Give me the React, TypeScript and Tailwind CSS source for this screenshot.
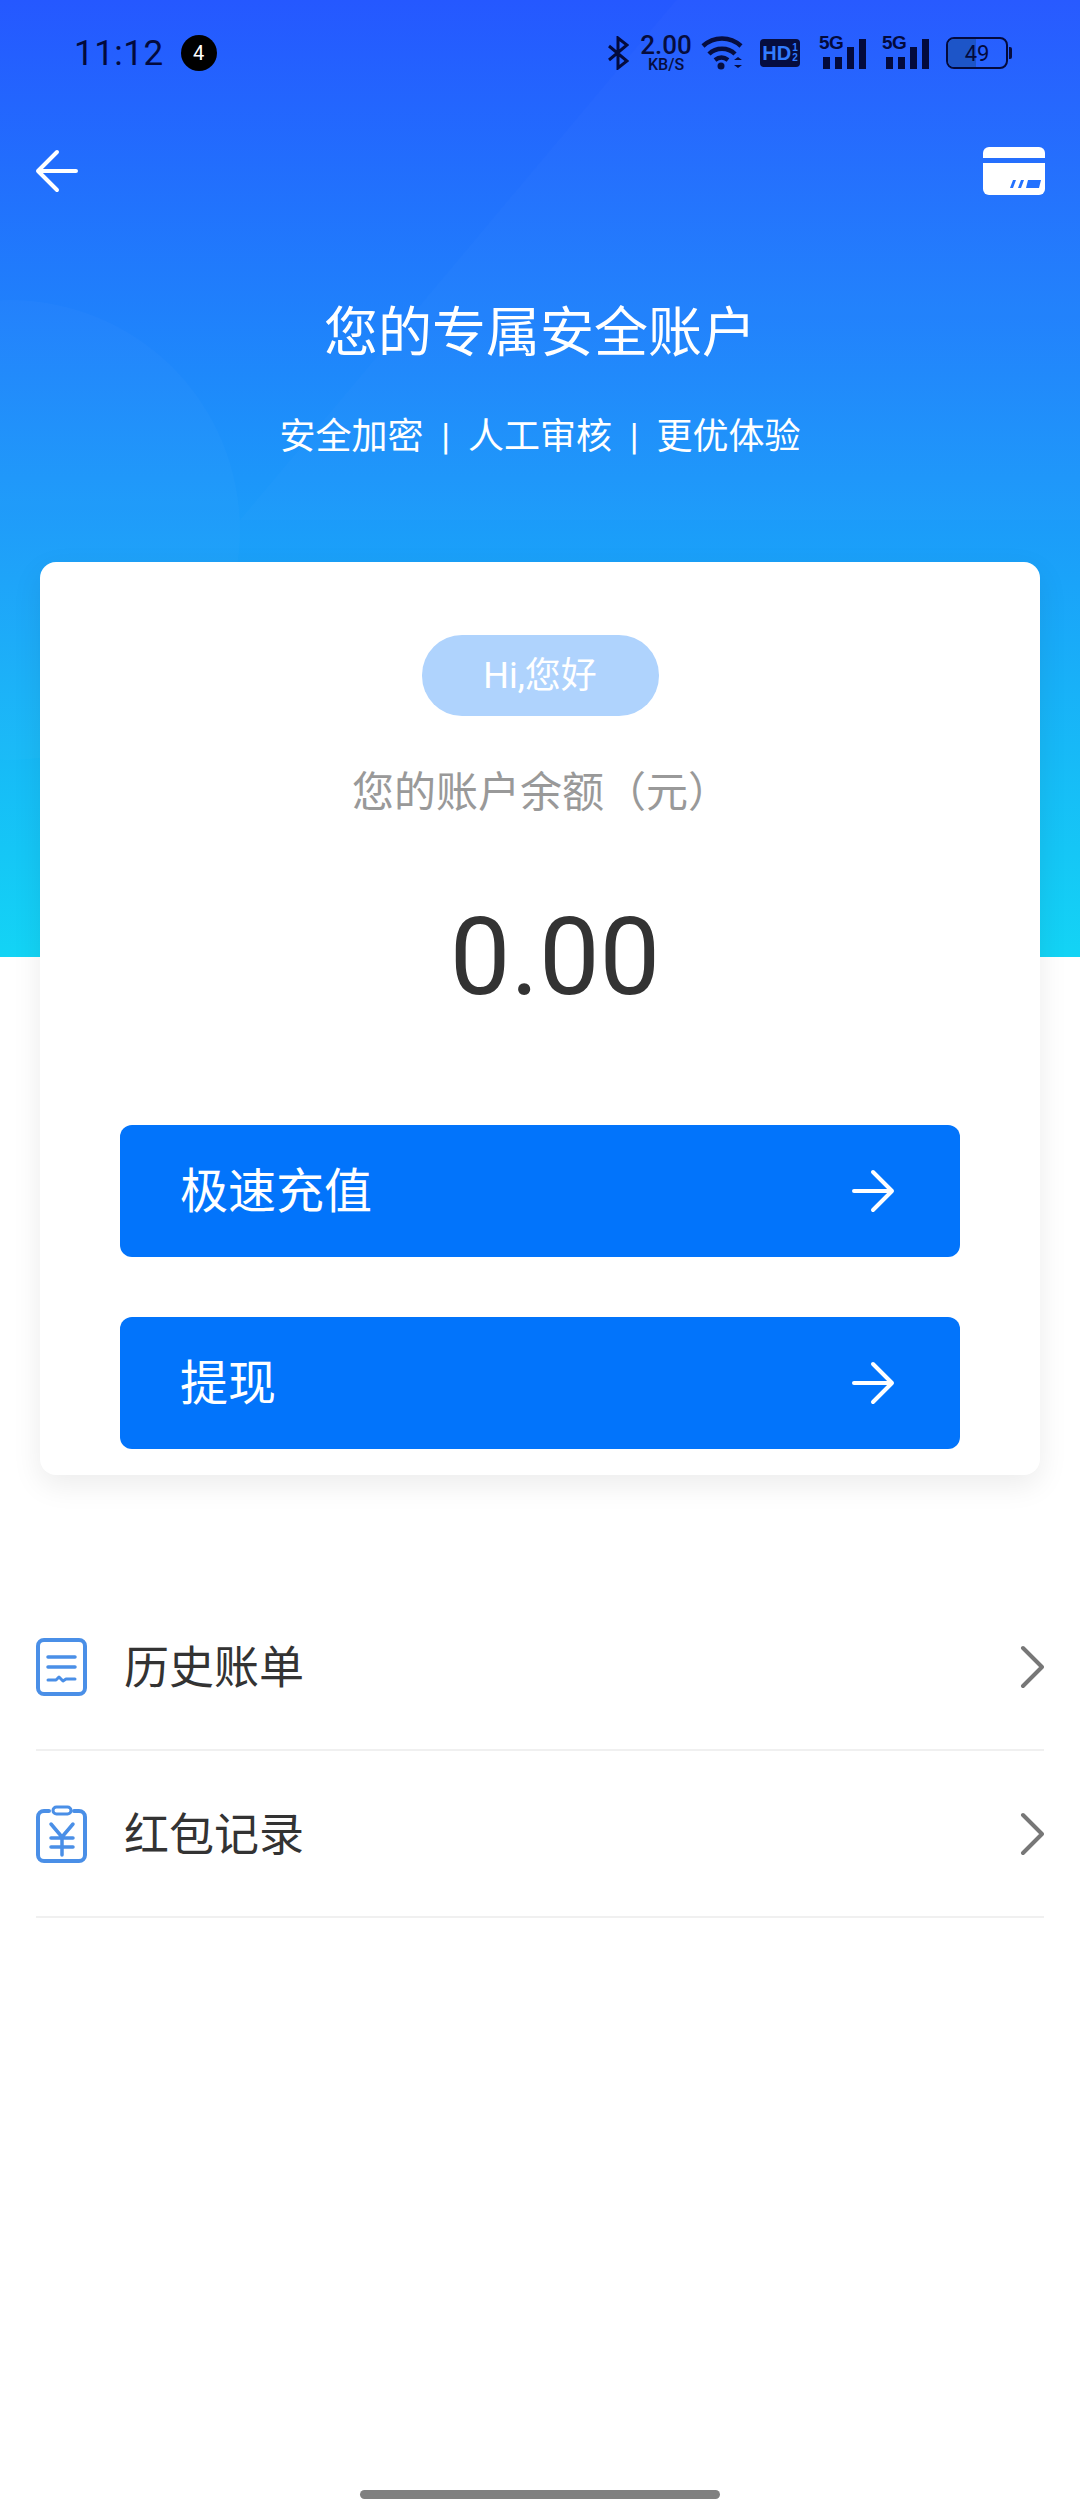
import React from 'react';

const cjk = "font-['Roboto','Noto_Sans_CJK_SC',sans-serif]";

function Arrow({ flip = false }: { flip?: boolean }) {
  return (
    <svg width="46" height="46" viewBox="0 0 46 46" fill="none" stroke="#fff" strokeWidth="4" strokeLinecap="round" strokeLinejoin="round" className={flip ? 'rotate-180' : ''}>
      <path d="M4 23h38M23 4l19 19-19 19" />
    </svg>
  );
}

function Chevron() {
  return (
    <svg width="24" height="44" viewBox="0 0 24 44" fill="none" stroke="#777" strokeWidth="4" strokeLinecap="round" strokeLinejoin="round">
      <path d="M3 3l19 19L3 41" />
    </svg>
  );
}

function BillIcon() {
  return (
    <svg width="52" height="58" viewBox="0 0 52 58" fill="none" stroke="#4a8fe7" strokeLinecap="round" strokeLinejoin="round">
      <rect x="2" y="2" width="47" height="54" rx="6" strokeWidth="4" />
      <path d="M12 19h27M12 29h27" strokeWidth="3.5" />
      <path d="M12 42h8l3-3 4 4 3-2h9" strokeWidth="3" />
    </svg>
  );
}

function RedPacketIcon() {
  return (
    <svg width="52" height="58" viewBox="0 0 52 58" fill="none" stroke="#4a8fe7" strokeLinecap="round" strokeLinejoin="round">
      <path d="M13 6H8a6 6 0 0 0-6 6v38a6 6 0 0 0 6 6h35a6 6 0 0 0 6-6V12a6 6 0 0 0-6-6h-5" strokeWidth="4" />
      <rect x="17" y="2" width="18" height="7" rx="3.5" strokeWidth="3" />
      <path d="M15 19l11 13 11-13M15 33h22M15 42h22M26 32v18" strokeWidth="3.5" />
    </svg>
  );
}

function CardIcon() {
  return (
    <svg width="62" height="48" viewBox="0 0 62 48">
      <path d="M6 0h50a6 6 0 0 1 6 6v5H0V6a6 6 0 0 1 6-6z" fill="#fff" />
      <path d="M0 16h62v26a6 6 0 0 1-6 6H6a6 6 0 0 1-6-6z" fill="#fff" />
      <path d="M27 41l3-8h3l-3 8zM35 41l3-8h3l-3 8zM43 41l2-8h13l-2 8z" fill="#1f6fff" />
    </svg>
  );
}

function Signal() {
  return (
    <div className="relative w-[47px] h-[32px]">
      <span className="absolute left-0 top-[-4px] text-[19px] leading-none font-bold font-['Liberation_Sans_Narrow','Liberation_Sans',sans-serif] tracking-[-0.5px]">5G</span>
      <div className="absolute left-[4px] bottom-0 flex items-end gap-[5px]">
        <div className="w-[7px] h-[12px] bg-[#030a3c]" />
        <div className="w-[7px] h-[12px] bg-[#030a3c]" />
        <div className="w-[7px] h-[22px] bg-[#030a3c]" />
        <div className="w-[7px] h-[30px] bg-[#030a3c]" />
      </div>
    </div>
  );
}

function StatusBar() {
  return (
    <div className="h-[80px] pt-[34px] pl-[74px] pr-[68px] flex items-start justify-between text-[#030a3c]">
      <div className="flex items-center h-[38px] gap-[17px]">
        <span className="font-['Roboto',sans-serif] text-[35px] leading-none tracking-[0.5px]">11:12</span>
        <span className="w-[36px] h-[36px] rounded-full bg-black text-white text-[20px] flex items-center justify-center font-['Roboto',sans-serif]">4</span>
      </div>
      <div className="flex items-center h-[38px]">
        <svg width="22" height="34" viewBox="0 0 22 34" fill="none" stroke="#030a3c" strokeWidth="3" className="mr-[12px]">
          <path d="M2 10l18 15-9 7V2l9 7L2 24" />
        </svg>
        <div className="flex flex-col items-center font-['Roboto',sans-serif] font-medium w-[50px] mr-[10px]">
          <span className="text-[26px] leading-[24px]">2.00</span>
          <span className="text-[16px] leading-[16px]">KB/S</span>
        </div>
        <svg width="44" height="34" viewBox="0 0 44 34" fill="none" stroke="#030a3c" strokeWidth="4.5" className="mr-[15px]">
          <path d="M2 10c11-10 27-10 38 0M8 18c7-7 19-7 26 0M14 24c4-3 9-3 13 0" />
          <circle cx="20" cy="30" r="3.5" fill="#030a3c" stroke="none" />
          <path d="M33 24l4-3 4 3zM33 29l4 3 4-3z" fill="#030a3c" stroke="none" />
        </svg>
        <div className="w-[40px] h-[28px] bg-[#030a3c] rounded-[4px] text-[#2f7bff] font-bold font-['Liberation_Sans_Narrow','Liberation_Sans',sans-serif] flex items-center justify-center gap-[1px] mr-[19px]">
          <span className="text-[20px] leading-none">HD</span>
          <span className="flex flex-col items-center text-[10px] leading-[10px]">
            <span>1</span>
            <span>2</span>
          </span>
        </div>
        <Signal />
        <div className="w-[16px]" />
        <Signal />
        <div className="w-[17px]" />
        <div className="w-[62px] h-[32px] rounded-[8px] border-2 border-[#030a3c] relative flex items-center justify-center overflow-hidden">
          <div className="absolute left-0 top-0 bottom-0 w-[49%] bg-[#1d55c8]" />
          <span className="relative text-[22px] font-['Roboto',sans-serif]">49</span>
        </div>
        <div className="w-[3px] h-[12px] bg-[#030a3c] rounded-r-[2px] ml-[1px]" />
      </div>
    </div>
  );
}

function ActionButton({ label, className }: { label: string; className?: string }) {
  return (
    <button className={`w-full h-[132px] rounded-[12px] bg-[#0274fb] flex items-center justify-between pl-[60px] pr-[64px] text-white text-[48px] ${className ?? ''}`}>
      <span className="mt-[2px]">{label}</span>
      <Arrow />
    </button>
  );
}

function ListRow({ icon, label }: { icon: React.ReactNode; label: string }) {
  return (
    <div className="h-[167px] border-b-2 border-[#f0f0f0] flex items-center justify-between">
      <div className="flex items-center gap-[36px]">
        {icon}
        <span className="text-[45px] text-[#333] mt-[5px]">{label}</span>
      </div>
      <Chevron />
    </div>
  );
}

export default function App() {
  return (
    <div className={`w-[1080px] h-[2520px] bg-white relative overflow-hidden ${cjk}`}>
      <div className="h-[957px] bg-[linear-gradient(180deg,#2558ff,#13d4f5)] relative overflow-hidden">
        <div className="absolute left-[-220px] top-[300px] w-[460px] h-[460px] rounded-full bg-white/[0.02]" />
        <div className="absolute left-[500px] top-[-100px] w-[900px] h-[620px] -skew-x-[40deg] bg-white/[0.015]" />
        <StatusBar />
        <div className="flex items-center justify-between pl-[34px] pr-[35px] mt-[67px]">
          <Arrow flip />
          <CardIcon />
        </div>
        <h1 className="text-center text-white text-[54px] leading-[64px] mt-[107px]">您的专属安全账户</h1>
        <p className="text-center text-white text-[36px] leading-[48px] mt-[47px] whitespace-pre">安全加密  |  人工审核  |  更优体验</p>
      </div>

      <div className="absolute left-[40px] top-[562px] w-[1000px] h-[913px] bg-white rounded-[16px] shadow-[0_10px_30px_rgba(0,0,0,0.08)] px-[80px] flex flex-col items-center">
        <div className="w-[237px] h-[81px] rounded-[40px] bg-[#afd3fd] text-white text-[36px] flex items-center justify-center mt-[73px]">Hi,您好</div>
        <div className="text-[#999] text-[42px] leading-[56px] mt-[49px] ml-[2px]">您的账户余额（元）</div>
        <div className="text-[#333] text-[108px] leading-[120px] mt-[76px] ml-[30px]">0.00</div>
        <ActionButton label="极速充值" className="mt-[108px]" />
        <ActionButton label="提现" className="mt-[60px]" />
      </div>

      <div className="absolute left-[36px] top-[1584px] w-[1008px]">
        <ListRow icon={<BillIcon />} label="历史账单" />
        <ListRow icon={<RedPacketIcon />} label="红包记录" />
      </div>

      <div className="absolute left-[360px] top-[2490px] w-[360px] h-[9px] rounded-full bg-[#808080]" />
    </div>
  );
}
